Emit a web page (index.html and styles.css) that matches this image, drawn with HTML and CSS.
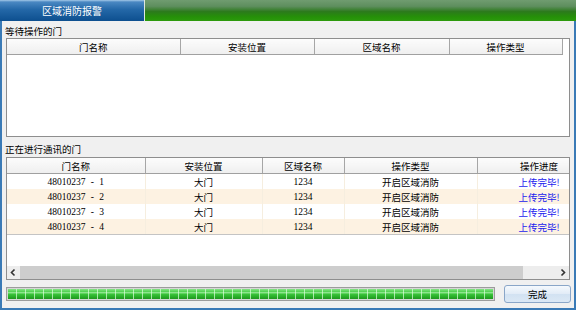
FILE: index.html
```html
<!DOCTYPE html>
<html lang="zh-CN">
<head>
    <meta charset="UTF-8">
    <title>区域消防报警</title>
    <link rel="stylesheet" href="styles.css">
</head>
<body>
<div class="window">
    <div class="titlebar">
        <div class="tab">区域消防报警</div>
        <div class="titlebar-fill"></div>
    </div>

    <div class="content">
        <div class="section-label">等待操作的门</div>
        <div class="list-box wait-box">
            <table class="grid wait-grid">
                <colgroup>
                    <col class="wc-name"><col class="wc-place"><col class="wc-area"><col class="wc-type">
                </colgroup>
                <thead>
                    <tr><th>门名称</th><th>安装位置</th><th>区域名称</th><th>操作类型</th></tr>
                </thead>
            </table>
        </div>

        <div class="section-label label-comm">正在进行通讯的门</div>
        <div class="list-box comm-box">
            <div class="grid-view">
                <table class="grid comm-grid">
                    <colgroup>
                        <col class="cc-name"><col class="cc-place"><col class="cc-area"><col class="cc-type"><col class="cc-state">
                    </colgroup>
                    <thead>
                        <tr><th>门名称</th><th>安装位置</th><th>区域名称</th><th>操作类型</th><th>操作进度</th></tr>
                    </thead>
                    <tbody>
                        <tr><td class="num">48010237 - 1</td><td>大门</td><td class="num">1234</td><td>开启区域消防</td><td class="state">上传完毕!</td></tr>
                        <tr><td class="num">48010237 - 2</td><td>大门</td><td class="num">1234</td><td>开启区域消防</td><td class="state">上传完毕!</td></tr>
                        <tr><td class="num">48010237 - 3</td><td>大门</td><td class="num">1234</td><td>开启区域消防</td><td class="state">上传完毕!</td></tr>
                        <tr><td class="num">48010237 - 4</td><td>大门</td><td class="num">1234</td><td>开启区域消防</td><td class="state">上传完毕!</td></tr>
                    </tbody>
                </table>
            </div>
            <div class="hscroll">
                <span class="scroll-arrow">
                    <svg width="13" height="13" viewBox="0 0 13 13"><path d="M7.5 3.5 L4.5 6.5 L7.5 9.5" fill="none" stroke="#333" stroke-width="1.6"/></svg>
                </span>
                <div class="scroll-thumb"></div>
                <div class="scroll-track"></div>
                <span class="scroll-arrow">
                    <svg width="13" height="13" viewBox="0 0 13 13"><path d="M5.5 3.5 L8.5 6.5 L5.5 9.5" fill="none" stroke="#333" stroke-width="1.6"/></svg>
                </span>
            </div>
        </div>

        <div class="footer">
            <div class="progress"><div class="progress-fill"></div></div>
            <button class="done-button">完成</button>
        </div>
    </div>
</div>
</body>
</html>
```

FILE: styles.css
```css
body {
    margin: 0;
    font-family: "Noto Sans CJK SC", sans-serif;
    font-size: 9.5px;
    color: #000;
    background-color: #f0f0f0;
}

.window {
    width: 576px;
    height: 310px;
    display: flex;
    flex-direction: column;
}

.titlebar {
    height: 21px;
    display: flex;
}

.tab {
    width: 144px;
    color: #fff;
    font-size: 10px;
    line-height: 21px;
    text-align: center;
    background: linear-gradient(#a4c9e8 0, #4a88c2 2px, #2468a8 45%, #0d4f8f 100%);
    border-right: 1px solid #dfe8df;
}

.titlebar-fill {
    flex: 1;
    background: linear-gradient(#709c70 0, #5e8e5e 30%, #2c7a1c 55%, #259008 80%, #2c9a0c 100%);
}

.content {
    flex: 1;
    display: flex;
    flex-direction: column;
    padding: 0 4px;
    border: 2px solid #3a7ab6;
    border-top: 0;
}

.section-label {
    height: 17px;
    padding-top: 3px;
    line-height: 14px;
    margin-left: -1px;
    box-sizing: border-box;
}

.label-comm {
    height: 20px;
    padding-top: 4px;
    line-height: 16px;
}

.list-box {
    background-color: #fff;
    border: 1px solid #8e8e8e;
    box-sizing: border-box;
    overflow: hidden;
}

.wait-box {
    height: 99px;
}

.comm-box {
    height: 123px;
    display: flex;
    flex-direction: column;
}

.grid {
    border-collapse: collapse;
    table-layout: fixed;
}

.wait-grid { width: 555px; }
.wc-name { width: 173px; }
.wc-place { width: 134px; }
.wc-area { width: 135px; }
.wc-type { width: 113px; }

.comm-grid { width: 594px; }
.cc-name { width: 138px; }
.cc-place { width: 117px; }
.cc-area { width: 82px; }
.cc-type { width: 133px; }
.cc-state { width: 124px; }

.grid th {
    height: 15px;
    padding: 0;
    font-weight: normal;
    text-align: center;
    white-space: nowrap;
    background: linear-gradient(#fcfcfc, #efefef);
    border-right: 1px solid #a6a6a6;
    border-bottom: 1px solid #a0a0a0;
}

.grid td {
    height: 15px;
    padding: 0;
    text-align: center;
    white-space: nowrap;
    border-right: 1px solid #f6eedf;
}

.grid tbody tr:nth-child(even) td {
    background-color: #fdf2e2;
}

.grid tbody tr:last-child td {
    border-bottom: 1px solid #c4c4c4;
}

.grid td.num {
    font-family: "Liberation Serif", serif;
    font-size: 9.5px;
    word-spacing: 3px;
}

.grid td.state {
    color: #1a1aee;
}

.grid-view {
    flex: 1;
    overflow: hidden;
}

.hscroll {
    height: 13px;
    display: flex;
    background-color: #ededed;
}

.scroll-arrow {
    width: 13px;
    height: 13px;
}

.scroll-thumb {
    width: 503px;
    background-color: #cdcdcd;
}

.scroll-track {
    flex: 1;
}

.footer {
    flex: 1;
    display: flex;
    align-items: center;
    justify-content: space-between;
}

.progress {
    width: 489px;
    height: 14px;
    padding: 1px;
    box-sizing: border-box;
    border: 1px solid #9c9c9c;
    background-color: #d6d6d6;
}

.progress-fill {
    height: 100%;
    background:
        repeating-linear-gradient(90deg, transparent 0 8px, rgba(220, 255, 220, 0.7) 8px 9px),
        linear-gradient(#86e486 0, #4ccf4c 30%, #b4f2b4 38%, #3cc63c 48%, #27ab27 80%, #1f961f 100%);
}

.done-button {
    width: 67px;
    height: 18px;
    margin-right: -1px;
    padding: 0;
    font-family: inherit;
    font-size: 9.5px;
    color: #000;
    border: 1px solid #8aa6c8;
    border-radius: 3px;
    background: linear-gradient(#f5f9fd, #e2ecf7 48%, #d2e2f2 52%, #dbe8f5 100%);
}
```
